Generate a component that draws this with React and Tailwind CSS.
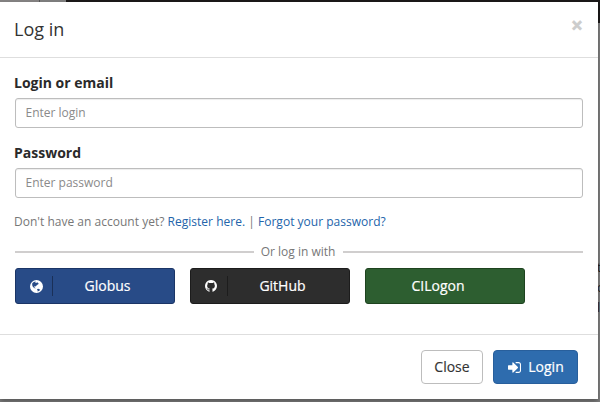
import React from "react";

function GlobeIcon() {
  return (
    <svg viewBox="0 0 24 24" className="size-[13px]" fill="currentColor" fillRule="evenodd" aria-hidden="true">
      <path d="M12 0a12 12 0 1 1 0 24a12 12 0 0 1 0-24z M4.2 6.2L7 3.8L10 2.6L10.6 3.8L9.4 5L11.6 5.6L13 4.2L15.2 5.6L16 7.4L14.2 8.2L12.8 9.6L11.4 10.6L10.2 12.2L8.6 11.4L7.4 12.8L9.4 14.2L10.2 15.4L9.4 15.8L6.6 13.8L5 11.8L4 9.2z M13.4 16.4L15.4 16L18.2 17.6L18.8 18.6L16.2 20.4L13.8 21.2L14.2 19.4L13.2 17.8z" />
    </svg>
  );
}

function GithubIcon() {
  return (
    <svg viewBox="128 128 1536 1536" className="size-3" fill="currentColor" aria-hidden="true">
      <path d="M896 128q209 0 385.5 103t279.5 279.5 103 385.5q0 251-146.5 451.5t-378.5 277.5q-27 5-40-7t-13-30q0-3 .5-76.5t.5-134.5q0-97-52-142 57-6 102.5-18t94-39 81-66.5 53-105 20.5-150.5q0-119-79-206 37-91-8-204-28-9-81 11t-92 44l-38 24q-93-26-192-26t-192 26q-16-11-42.5-27t-83.5-38.5-85-13.5q-45 113-8 204-79 87-79 206 0 85 20.5 150t52.5 105 80.5 67 94 39 102.5 18q-39 36-49 103-21 10-45 15t-57 5-65.5-21.5-55.5-62.5q-19-32-48.5-52t-49.5-24l-20-3q-21 0-29 4.5t-5 11.5 9 14 13 12l7 5q22 10 43.5 38t31.5 51l10 23q13 38 44 61.5t67 30 69.5 7 55.5-3.5l23-4q0 38 .5 88.5t.5 54.5q0 18-13 30t-40 7q-232-77-378.5-277.5t-146.5-451.5q0-209 103-385.5t279.5-279.5 385.5-103z" />
    </svg>
  );
}

function SignInIcon() {
  return (
    <svg viewBox="64 128 1536 1536" className="size-[13px]" fill="currentColor" aria-hidden="true">
      <path d="M1248 896q0 26-19 45l-544 544q-19 19-45 19t-45-19-19-45v-288h-448q-26 0-45-19t-19-45v-384q0-26 19-45t45-19h448v-288q0-26 19-45t45-19 45 19l544 544q19 19 19 45zm352-352v704q0 119-84.5 203.5t-203.5 84.5h-320q-13 0-22.5-9.5t-9.5-22.5q0-4-1-20t-.5-26.5 3-23.5 10-19.5 20.5-6.5h320q66 0 113-47t47-113v-704q0-66-47-113t-113-47h-312l-11.5-1-11.5-3-8-5.5-7-9-2-13.5q0-4-1-20t-.5-26.5 3-23.5 10-19.5 20.5-6.5h320q119 0 203.5 84.5t84.5 203.5z" />
    </svg>
  );
}

function Field({ label, placeholder, type }) {
  return (
    <label className="block">
      <span className="-ml-px block h-5 text-[14px] leading-5 font-bold text-[#2a2a2a]">{label}</span>
      <input
        type={type}
        placeholder={placeholder}
        className="mt-[5px] block h-[30px] w-full rounded-[3px] border border-[#bdbdbd] bg-white px-[9.5px] pb-[2px] text-[12px] text-[#333] shadow-[inset_0_1px_1px_rgba(0,0,0,0.075)] placeholder:text-[#8a8a8a]"
      />
    </label>
  );
}

function ProviderButton({ icon, name, color }) {
  return (
    <button className={`flex h-9 w-40 items-center rounded-[3px] border text-[14px] leading-5 font-medium text-white [-webkit-text-stroke:0.2px_white] ${color}`}>
      {icon && (
        <span className="flex h-5 w-[37px] items-center border-r border-black/35 pl-[14px]">{icon}</span>
      )}
      <span className={icon ? "flex-1 pr-[12px] text-center" : "flex-1 pr-[14px] text-center"}>{name}</span>
    </button>
  );
}

export default function App() {
  return (
    <div className="relative h-[402px] w-[600px] overflow-hidden bg-[#7f7f7f] font-['Open_Sans','Noto_Sans',sans-serif]">
      {/* Dimmed page behind the dialog */}
      <div className="absolute top-0 left-0 h-[2px] w-10 border-r border-[#555] bg-[#858383]" />
      <div className="absolute top-0 left-[66px] h-[23px] w-[534px] bg-[#1b1919]" />
      <div className="absolute top-[258px] left-[597px] w-3 text-[12px] leading-[20px] text-[#222]">
        <div>t</div>
        <div>o</div>
        <div>l</div>
      </div>

      <div className="relative mt-[2px] flex h-[397px] w-[598px] flex-col bg-white shadow-[0_3px_5px_rgba(0,0,0,0.3)]">
        <header className="flex h-14 shrink-0 items-center justify-between border-b border-[#dedede] pr-[15px] pl-[14px]">
          <h1 className="mb-px text-[18px] leading-6 text-[#333]">Log in</h1>
          <button aria-label="Close dialog" className="mb-[9px] text-[21px] leading-5 font-bold text-[#ccc] [-webkit-text-stroke:0.5px_#ccc]">×</button>
        </header>

        <main className="h-[276px] shrink-0 px-[15px] pt-[15px]">
          <div className="flex flex-col gap-[15px]">
            <Field label="Login or email" placeholder="Enter login" type="text" />
            <Field label="Password" placeholder="Enter password" type="password" />
          </div>
          <p className="mt-[14px] -ml-px text-[12px] leading-5 tracking-[0.015px] whitespace-nowrap text-[#777]">
            Don't have an account yet? <a className="text-[#2364aa]">Register here.</a> | <a className="text-[#2364aa]">Forgot your password?</a>
          </p>
          <div className="mt-[10px] flex h-5 items-center text-[12px] text-[#777]">
            <span className="h-[2px] w-[239px] bg-[#d0cece]" />
            <span className="flex-1 pr-px text-center">Or log in with</span>
            <span className="h-[2px] w-[240px] bg-[#d0cece]" />
          </div>
          <div className="mt-[6px] flex gap-[15px]">
            <ProviderButton name="Globus" color="border-[#1b3566] bg-[#284b87]" icon={<GlobeIcon />} />
            <ProviderButton name="GitHub" color="border-[#1c1c1c] bg-[#2d2d2d]" icon={<GithubIcon />} />
            <ProviderButton name="CILogon" color="border-[#1e431f] bg-[#2d5e30]" />
          </div>
        </main>

        <footer className="flex flex-1 justify-end gap-[10px] border-t border-[#dedede] pt-[15px] pr-5">
          <button className="h-[34px] w-[62px] rounded-[4px] border border-[#bdbdbd] pb-[2px] text-[14px] text-[#333] [-webkit-text-stroke:0.15px_#333]">Close</button>
          <button className="flex h-[34px] w-[85px] items-center justify-center gap-[7px] rounded-[4px] border border-[#285f9c] bg-[#2e6cae] pl-px text-[14px] leading-5 font-medium text-white [-webkit-text-stroke:0.2px_white]">
            <SignInIcon />
            <span>Login</span>
          </button>
        </footer>
      </div>
    </div>
  );
}
